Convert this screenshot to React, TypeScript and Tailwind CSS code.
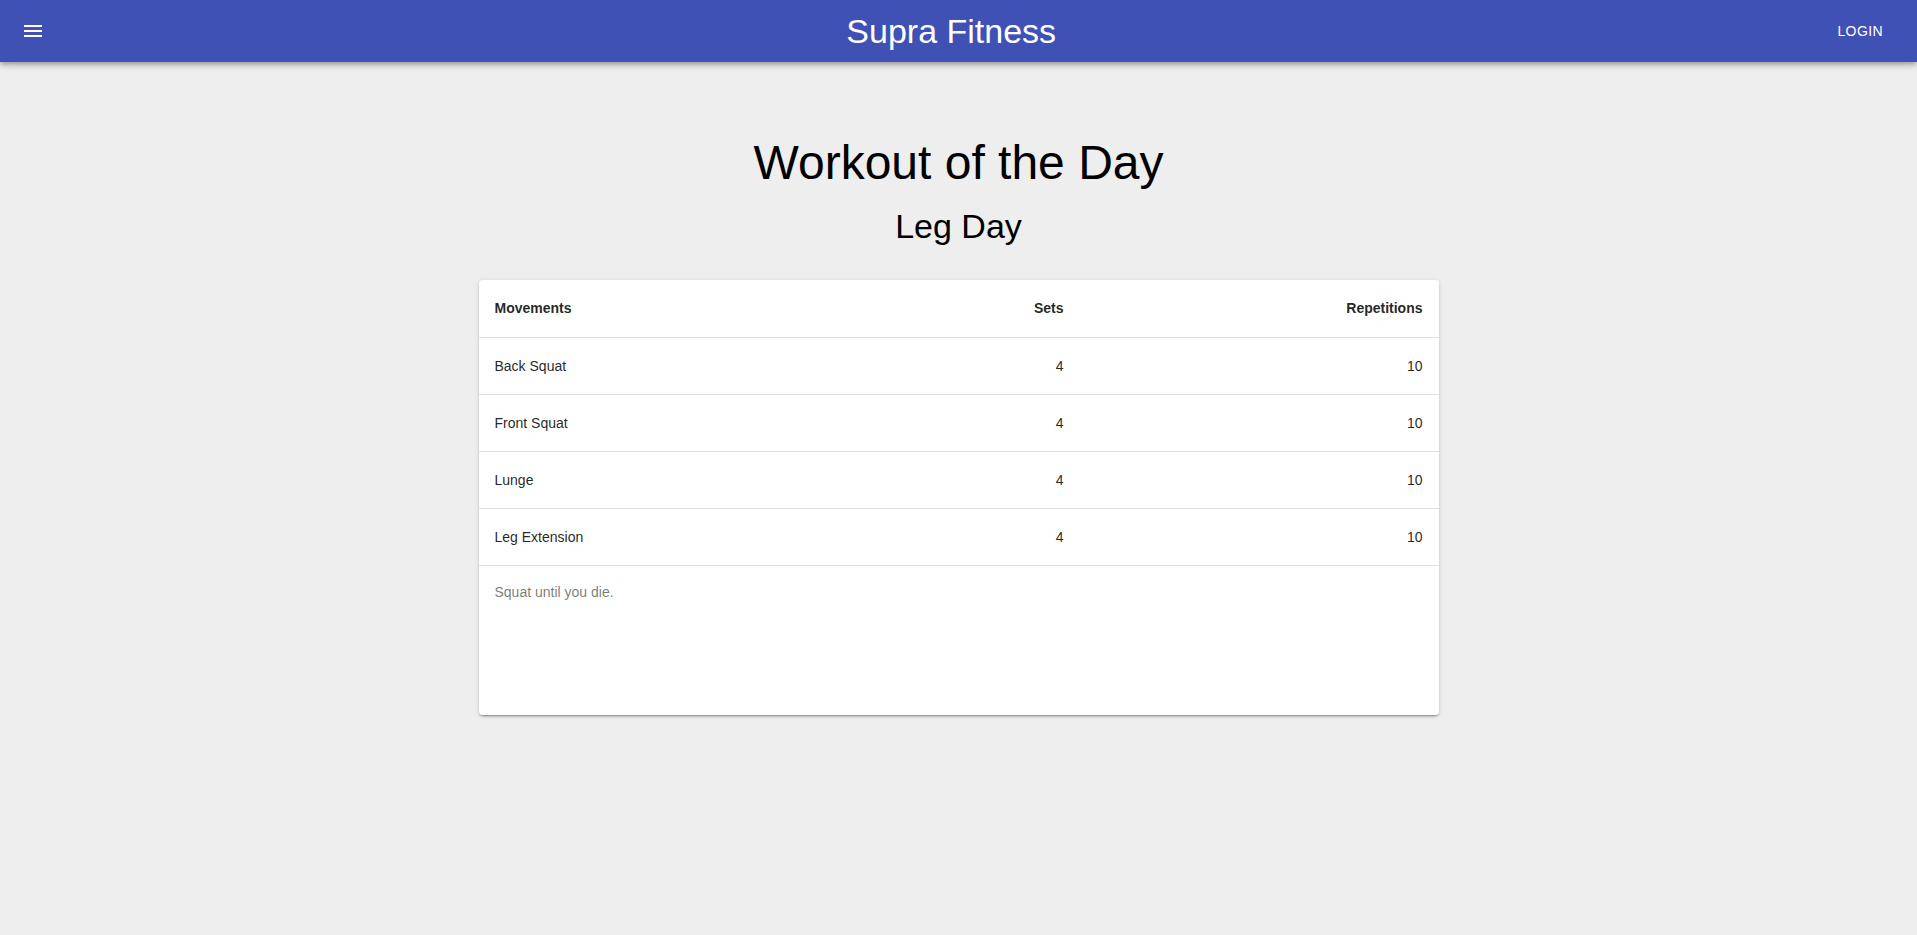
const rows = [
  { name: "Back Squat", sets: 4, reps: 10 },
  { name: "Front Squat", sets: 4, reps: 10 },
  { name: "Lunge", sets: 4, reps: 10 },
  { name: "Leg Extension", sets: 4, reps: 10 },
];

function MenuIcon() {
  // material "menu" glyph
  return (
    <svg viewBox="0 0 24 24" width="24" height="24" fill="currentColor" aria-hidden>
      <path d="M3 18h18v-2H3v2zm0-5h18v-2H3v2zm0-7v2h18V6H3z" />
    </svg>
  );
}

export default function App() {
  return (
    <div className="min-h-screen bg-[#eeeeee] font-['Liberation_Sans',Arial,sans-serif] text-[rgba(0,0,0,0.87)]">
      <header className="relative z-10 flex h-[62px] items-center bg-[#3f51b5] pl-[9px] pr-[26px] text-white shadow-[0_2px_4px_-1px_rgba(0,0,0,0.2),0_4px_5px_0_rgba(0,0,0,0.14),0_1px_10px_0_rgba(0,0,0,0.12)]">
        <button type="button" className="mr-4 flex h-12 w-12 items-center justify-center rounded-full">
          <MenuIcon />
        </button>
        <h1 className="flex-1 text-center text-[34px] leading-[40px]">Supra Fitness</h1>
        <button type="button" className="px-2 py-1.5 text-sm uppercase tracking-[0.4px]">
          Login
        </button>
      </header>

      <main className="pt-[73px]">
        <h2 className="text-center text-[48px] leading-[56px] text-black">Workout of the Day</h2>
        <h3 className="mt-[14px] text-center text-[34px] leading-[42px] text-black">Leg Day</h3>

        <div className="mt-[33px] flex justify-center">
          <div className="w-[960px] overflow-hidden rounded bg-white shadow-[0_3px_1px_-2px_rgba(0,0,0,0.2),0_2px_2px_0_rgba(0,0,0,0.14),0_1px_5px_0_rgba(0,0,0,0.12)]">
            <table className="w-full table-fixed border-collapse text-sm">
              <colgroup>
                <col className="w-[242px]" />
                <col className="w-[359px]" />
                <col className="w-[359px]" />
              </colgroup>
              <thead>
                <tr className="h-[57px] border-b border-[#e0e0e0]">
                  <th className="px-4 text-left font-bold">Movements</th>
                  <th className="px-4 text-right font-bold">Sets</th>
                  <th className="px-4 text-right font-bold">Repetitions</th>
                </tr>
              </thead>
              <tbody>
                {rows.map((r) => (
                  <tr key={r.name} className="h-[57px] border-b border-[#e0e0e0]">
                    <td className="px-4 text-left">{r.name}</td>
                    <td className="px-4 text-right">{r.sets}</td>
                    <td className="px-4 text-right">{r.reps}</td>
                  </tr>
                ))}
              </tbody>
            </table>
            <div className="h-[149px] px-4 pt-4 text-sm leading-5 text-[rgba(0,0,0,0.54)]">Squat until you die.</div>
          </div>
        </div>
      </main>
    </div>
  );
}
